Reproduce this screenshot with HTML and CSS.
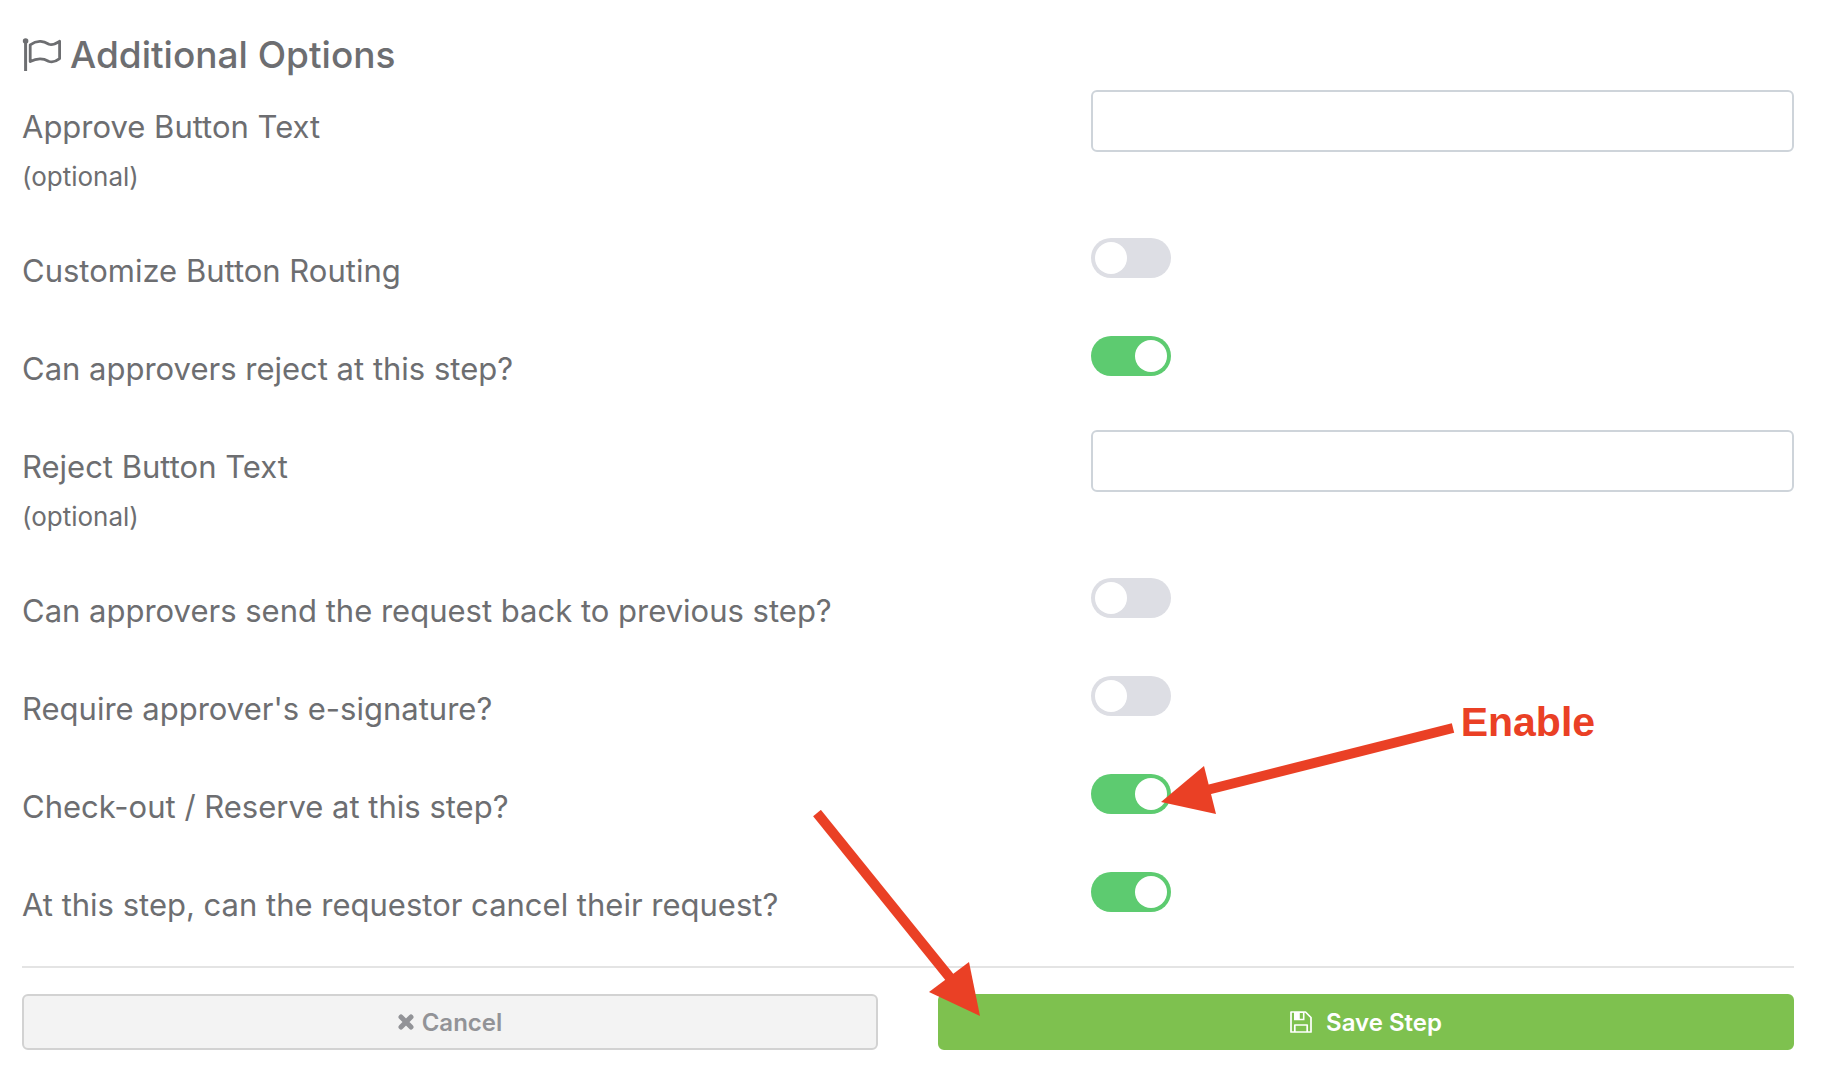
FILE: index.html
```html
<!DOCTYPE html>
<html lang="en">
<head>
  <meta charset="UTF-8">
  <meta name="viewport" content="width=device-width, initial-scale=1.0">
  <title>Additional Options</title>
  <link rel="stylesheet" href="styles.css">
</head>
<body>
  <form class="step-form">
    <h2 class="title">
      <svg class="flag-icon" viewBox="0 0 40 34" aria-hidden="true">
        <circle cx="3.6" cy="4" r="2.8" fill="currentColor"/>
        <path d="M3.6 4V34" stroke="currentColor" stroke-width="3"/>
        <path d="M8.2 7.8C16 2.2 22 4.6 27 7.2C31 8.6 34.4 6.2 37.6 4.2V21.6C34 24.4 30.5 25.8 26.5 24.2C20 20.6 15 21 8.2 24.6Z" fill="none" stroke="currentColor" stroke-width="2.8" stroke-linejoin="round"/>
      </svg>
      Additional Options
    </h2>

    <div class="row row-text">
      <label class="label" for="approve-text">Approve Button Text <small>(optional)</small></label>
      <div class="control"><input class="text-input" type="text" id="approve-text"></div>
    </div>

    <div class="row">
      <label class="label" for="routing">Customize Button Routing</label>
      <div class="control"><input class="toggle" type="checkbox" id="routing"></div>
    </div>

    <div class="row">
      <label class="label" for="can-reject">Can approvers reject at this step?</label>
      <div class="control"><input class="toggle" type="checkbox" id="can-reject" checked></div>
    </div>

    <div class="row row-text">
      <label class="label" for="reject-text">Reject Button Text <small>(optional)</small></label>
      <div class="control"><input class="text-input" type="text" id="reject-text"></div>
    </div>

    <div class="row">
      <label class="label" for="send-back">Can approvers send the request back to previous step?</label>
      <div class="control"><input class="toggle" type="checkbox" id="send-back"></div>
    </div>

    <div class="row">
      <label class="label" for="signature">Require approver's e-signature?</label>
      <div class="control"><input class="toggle" type="checkbox" id="signature"></div>
    </div>

    <div class="row">
      <label class="label" for="reserve">Check-out / Reserve at this step?</label>
      <div class="control">
        <input class="toggle" type="checkbox" id="reserve" checked>
        <!-- Callout pointing at the switch -->
        <div class="callout">
          <svg class="callout-arrow" viewBox="0 0 294 92" aria-hidden="true">
            <path d="M292 6L46 68" stroke="currentColor" stroke-width="10"/>
            <path d="M0 80L43 44L55 92Z" fill="currentColor"/>
          </svg>
          <span class="callout-text">Enable</span>
        </div>
      </div>
    </div>

    <div class="row">
      <label class="label" for="can-cancel">At this step, can the requestor cancel their request?</label>
      <div class="control"><input class="toggle" type="checkbox" id="can-cancel" checked></div>
    </div>

    <div class="actions">
      <div class="action">
        <button type="button" class="btn btn-cancel">
          <svg class="times-icon" viewBox="0 0 16 16" aria-hidden="true">
            <path d="M3 3L13 13M13 3L3 13" stroke="currentColor" stroke-width="5" stroke-linecap="round"/>
          </svg>
          Cancel
        </button>
      </div>
      <div class="action">
        <button type="button" class="btn btn-save">
          <svg class="save-icon" viewBox="0 0 22 22" aria-hidden="true">
            <path d="M1 1H15.5L21 6.5V21H1ZM4.8 21V14H17.2V21" fill="none" stroke="currentColor" stroke-width="1.7" stroke-linejoin="round"/>
            <path fill-rule="evenodd" d="M4 1H14.5V9.3H4ZM9.8 2V7.8H12.9V2Z" fill="currentColor"/>
          </svg>
          Save Step
        </button>
        <svg class="save-arrow" viewBox="0 0 168 206" aria-hidden="true">
          <path d="M4 3L138 169" stroke="currentColor" stroke-width="10"/>
          <path d="M167 206L156 152L116 182Z" fill="currentColor"/>
        </svg>
      </div>
    </div>
  </form>
</body>
</html>
```

FILE: styles.css
```css
* {
  box-sizing: border-box;
}

body {
  font-family: Inter, "Liberation Sans", sans-serif;
  margin: 0;
  background-color: #fff;
  color: #6d6e71;
}

.step-form {
  padding: 30px 28px 40px 22px;
}

.title {
  display: flex;
  align-items: center;
  gap: 8px;
  height: 48px;
  margin: 0 0 12px;
  font-size: 37px;
  font-weight: 500;
}

.flag-icon {
  width: 40px;
  height: 34px;
}

.row {
  display: grid;
  grid-template-columns: repeat(12, 1fr);
  column-gap: 60px;
  min-height: 98px;
}

.row-text {
  min-height: 144px;
}

.label {
  grid-column: span 7;
  padding-top: 12px;
  font-size: 31px;
  line-height: 50px;
}

.label small {
  display: block;
  font-size: 26px;
}

.control {
  grid-column: span 5;
  position: relative;
}

.text-input {
  display: block;
  width: 100%;
  height: 62px;
  padding: 0 16px;
  border: 2px solid #ced4da;
  border-radius: 6px;
  background: #fff;
  color: inherit;
  font: inherit;
  font-size: 26px;
}

.toggle {
  appearance: none;
  display: block;
  width: 80px;
  height: 40px;
  margin: 4px 0 0;
  padding: 4px;
  border-radius: 20px;
  background-color: #dddee4;
  cursor: pointer;
}

.toggle::before {
  content: "";
  display: block;
  width: 32px;
  height: 32px;
  border-radius: 50%;
  background: #fff;
}

.toggle:checked {
  background-color: #5dcb70;
}

.toggle:checked::before {
  margin-left: auto;
}

.actions {
  display: flex;
  gap: 60px;
  padding-top: 26px;
  border-top: 2px solid #e4e4e4;
}

.action {
  flex: 1;
  position: relative;
}

.btn {
  display: flex;
  align-items: center;
  justify-content: center;
  width: 100%;
  height: 56px;
  border: 2px solid;
  border-radius: 6px;
  font-family: inherit;
  font-size: 24px;
  font-weight: 600;
  cursor: pointer;
}

.btn-cancel {
  gap: 8px;
  background-color: #f3f3f3;
  border-color: #d2d2d2;
  color: #929397;
}

.btn-save {
  gap: 14px;
  background-color: #7ec14f;
  border-color: #7ec14f;
  color: #fff;
}

.times-icon {
  width: 16px;
  height: 16px;
}

.save-icon {
  width: 22px;
  height: 22px;
}

/* Red annotations */
.callout,
.save-arrow {
  position: absolute;
  color: #ea4025;
  pointer-events: none;
}

.callout {
  left: 70px;
  top: -48px;
  display: flex;
  gap: 6px;
}

.callout-arrow {
  width: 294px;
  height: 92px;
}

.callout-text {
  margin-top: -24px;
  font-family: "Liberation Sans", Arial, sans-serif;
  font-size: 41px;
  font-weight: 700;
  line-height: 48px;
}

.save-arrow {
  left: -125px;
  top: -184px;
  width: 168px;
  height: 206px;
}
```
